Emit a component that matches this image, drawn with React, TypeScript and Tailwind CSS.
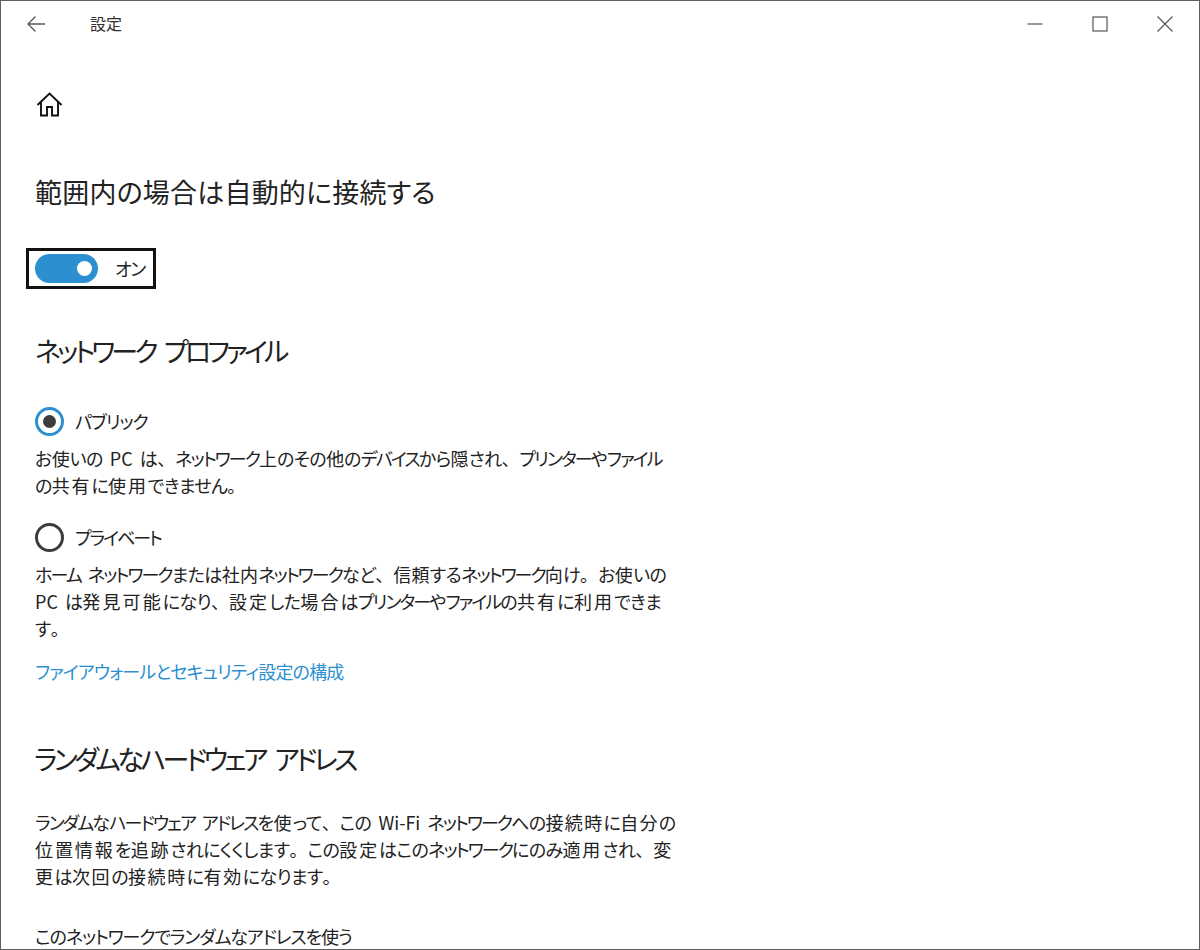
const jp = "font-['Noto_Sans_CJK_JP',sans-serif] [font-feature-settings:'palt']";

function Heading({ children, className }: { children: string; className: string }) {
  return <h2 className={`h-[36px] text-[27px] leading-[36px] font-normal whitespace-pre text-[#222] ${className}`}>{children}</h2>;
}

function runClass(run: string) {
  if (/^[\u30A0-\u30FF]/.test(run)) return "tracking-[-1.9px]";
  if (/^[\u3041-\u309F]/.test(run)) return "tracking-[-0.6px]";
  if (/^[、。]/.test(run)) return "tracking-normal [font-feature-settings:normal]";
  if (/^[A-Za-z\- ]/.test(run)) return "tracking-normal";
  return "";
}

function Line({ children, className }: { children: string; className: string }) {
  const runs = children.match(/[\u30A0-\u30FF]+|[\u3041-\u309F]+|[、。]+|[A-Za-z\- ]+|[^\u30A0-\u30FF\u3041-\u309F、。A-Za-z\- ]+/g) ?? [];
  return (
    <span className={`block whitespace-pre [word-spacing:3px] ${className}`}>
      {runs.map((r, i) => (
        <span key={i} className={runClass(r)}>{r}</span>
      ))}
    </span>
  );
}

function Radio({ label, checked, className }: { label: string; checked?: boolean; className: string }) {
  return (
    <div className={`flex items-center h-[28px] ${className}`}>
      <span
        className={`w-[29px] h-[29px] rounded-full border-[3px] flex items-center justify-center shrink-0 ${
          checked ? "border-[#2b8fd0]" : "border-[#3c3c3c]"
        }`}
      >
        {checked && <span className="w-[13px] h-[13px] rounded-full bg-[#3c3c3c]" />}
      </span>
      <span className={`ml-[11px] text-[18px] text-[#222] ${checked ? "tracking-[-1px]" : "tracking-[-2px]"}`}>{label}</span>
    </div>
  );
}

export default function App() {
  return (
    <div className={`w-[1200px] h-[950px] overflow-hidden bg-white border border-[#5f5f5f] flex flex-col ${jp}`}>
      <div className="h-[46px] shrink-0 flex items-center">
        <svg width="20" height="18" viewBox="0 0 20 18" fill="none" stroke="#555" strokeWidth="1.3" className="ml-[25px]">
          <path d="M19 9H2M9.5 1.5 2 9l7.5 7.5" />
        </svg>
        <span className="ml-[44px] mb-[2px] text-[16px] text-[#333]">設定</span>
        <div className="ml-auto flex items-center">
          <svg width="16" height="16" viewBox="0 0 16 16" fill="none" stroke="#555" strokeWidth="1.2">
            <path d="M0.5 8H15.5" />
          </svg>
          <svg width="16" height="16" viewBox="0 0 16 16" fill="none" stroke="#555" strokeWidth="1.2" className="ml-[49px]">
            <rect x="1" y="1" width="14" height="14" />
          </svg>
          <svg width="16" height="16" viewBox="0 0 16 16" fill="none" stroke="#555" strokeWidth="1.2" className="ml-[49px] mr-[26px]">
            <path d="M.5.5l15 15M15.5.5l-15 15" />
          </svg>
        </div>
      </div>

      <div className="pl-[34px] flex flex-col items-start">
        <svg width="27" height="25" viewBox="0 0 27 25" fill="none" stroke="#111" strokeWidth="1.9" className="mt-[45px] ml-[1px]">
          <path d="M1.5 13 13.5 1.5 25.5 13M5 10v13.5h6V15h5v8.5h6V10" />
        </svg>

        <Heading className="mt-[57px] tracking-[0.2px]">範囲内の場合は自動的に接続する</Heading>

        <div className="mt-[38px] -ml-[9px] w-[130px] h-[41px] border-[3px] border-[#111] flex items-center pl-[6px]">
          <span className="w-[63px] h-[29px] rounded-full bg-[#2b8fd0] flex items-center justify-end pr-[6px]">
            <span className="w-[15px] h-[15px] rounded-full bg-white" />
          </span>
          <span className="ml-[17px] text-[18px] tracking-[-1.4px] text-[#222]">オン</span>
        </div>

        <Heading className="mt-[44px] tracking-[-3.85px] [word-spacing:7px]">ネットワーク プロファイル</Heading>

        <Radio label="パブリック" checked className="mt-[38px]" />
        <p className="mt-[10px] text-[18px] leading-[27px] text-[#222]">
          <Line className="tracking-[0px]">お使いの PC は、ネットワーク上のその他のデバイスから隠され、プリンターやファイル</Line>
          <Line className="tracking-[1.8px]">の共有に使用できません。</Line>
        </p>
        <Radio label="プライベート" className="mt-[24px]" />
        <p className="mt-[10px] text-[18px] leading-[27px] text-[#222]">
          <Line className="tracking-[0.3px]">ホーム ネットワークまたは社内ネットワークなど、信頼するネットワーク向け。お使いの</Line>
          <Line className="tracking-[2.1px]">PC は発見可能になり、設定した場合はプリンターやファイルの共有に利用できま</Line>
          <Line className="tracking-[0px]">す。</Line>
        </p>
        <a className="mt-[16px] text-[18px] leading-[27px] tracking-[-0.85px] text-[#2b8fd0] whitespace-nowrap">ファイアウォールとセキュリティ設定の構成</a>

        <Heading className="mt-[56px] -ml-[1px] tracking-[-3.5px] [word-spacing:7px]">ランダムなハードウェア アドレス</Heading>

        <p className="mt-[32px] text-[18px] leading-[27px] text-[#222]">
          <Line className="tracking-[1.3px]">ランダムなハードウェア アドレスを使って、この Wi-Fi ネットワークへの接続時に自分の</Line>
          <Line className="tracking-[1.9px]">位置情報を追跡されにくくします。この設定はこのネットワークにのみ適用され、変</Line>
          <Line className="tracking-[1.6px]">更は次回の接続時に有効になります。</Line>
        </p>
        <p className="mt-[33px] text-[18px] leading-[27px] tracking-[-1.1px] text-[#222] whitespace-nowrap">このネットワークでランダムなアドレスを使う</p>
      </div>
    </div>
  );
}
